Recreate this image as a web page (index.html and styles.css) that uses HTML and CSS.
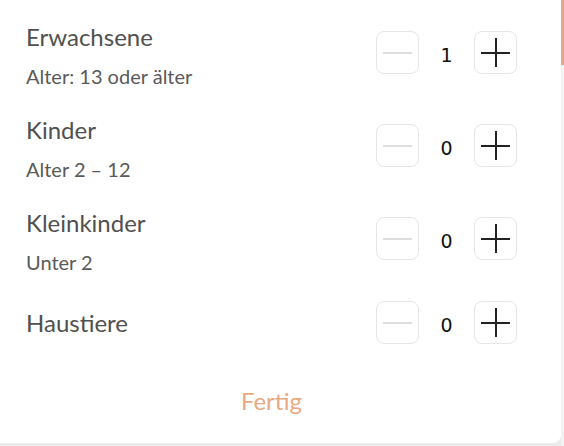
FILE: index.html
```html
<!DOCTYPE html>
<html lang="de">
<head>
    <meta charset="UTF-8">
    <meta name="viewport" content="width=device-width, initial-scale=1.0">
    <title>Gäste auswählen</title>
    <link rel="stylesheet" href="styles.css">
</head>
<body>
    <div class="sheet">
        <div class="guest-panel">
            <div class="guest-list">
                <div class="guest-row">
                    <div class="guest-info">
                        <div class="guest-title">Erwachsene</div>
                        <div class="guest-sub">Alter: 13 oder älter</div>
                    </div>
                    <div class="stepper">
                        <button class="step-btn step-minus" aria-label="weniger"><span class="bar-h"></span></button>
                        <span class="step-count">1</span>
                        <button class="step-btn step-plus" aria-label="mehr"><span class="bar-h"></span><span class="bar-v"></span></button>
                    </div>
                </div>
                <div class="guest-row">
                    <div class="guest-info">
                        <div class="guest-title">Kinder</div>
                        <div class="guest-sub">Alter 2 – 12</div>
                    </div>
                    <div class="stepper">
                        <button class="step-btn step-minus" aria-label="weniger"><span class="bar-h"></span></button>
                        <span class="step-count">0</span>
                        <button class="step-btn step-plus" aria-label="mehr"><span class="bar-h"></span><span class="bar-v"></span></button>
                    </div>
                </div>
                <div class="guest-row">
                    <div class="guest-info">
                        <div class="guest-title">Kleinkinder</div>
                        <div class="guest-sub">Unter 2</div>
                    </div>
                    <div class="stepper">
                        <button class="step-btn step-minus" aria-label="weniger"><span class="bar-h"></span></button>
                        <span class="step-count">0</span>
                        <button class="step-btn step-plus" aria-label="mehr"><span class="bar-h"></span><span class="bar-v"></span></button>
                    </div>
                </div>
                <div class="guest-row guest-row-last">
                    <div class="guest-info">
                        <div class="guest-title">Haustiere</div>
                    </div>
                    <div class="stepper">
                        <button class="step-btn step-minus" aria-label="weniger"><span class="bar-h"></span></button>
                        <span class="step-count">0</span>
                        <button class="step-btn step-plus" aria-label="mehr"><span class="bar-h"></span><span class="bar-v"></span></button>
                    </div>
                </div>
            </div>
            <div class="panel-footer">
                <button class="btn-done">Fertig</button>
            </div>
        </div>
        <div class="scroll-track"><div class="scroll-thumb"></div></div>
    </div>
</body>
</html>
```

FILE: styles.css
```css
html, body {
    margin: 0;
    padding: 0;
}
body {
    font-family: 'Lato', 'Open Sans', sans-serif;
    background-color: #ebebeb;
    color: #484848;
    height: 446px;
    overflow: hidden;
}
.sheet {
    display: flex;
    height: 443px;
}
.guest-panel {
    width: 561px;
    box-sizing: border-box;
    background-color: #fff;
    border-bottom-right-radius: 8px;
    padding: 6px 44px 0 26px;
    display: flex;
    flex-direction: column;
}
.guest-row {
    display: flex;
    align-items: center;
    justify-content: space-between;
    padding: 14px 0;
}
.guest-row-last {
    margin-top: 2px;
}
.guest-title {
    font-size: 24px;
    line-height: 34px;
    color: #505050;
}
.guest-sub {
    font-size: 20px;
    line-height: 17px;
    margin-top: 14px;
    color: #5a5a5a;
}
.stepper {
    display: flex;
    align-items: center;
}
.step-btn {
    width: 43px;
    height: 43px;
    box-sizing: border-box;
    border: 1px solid #e6e6e6;
    border-radius: 8px;
    background: #fff;
    padding: 0;
    position: relative;
    cursor: pointer;
}
.bar-h, .bar-v {
    position: absolute;
    left: 50%;
    top: 50%;
    background-color: #222;
}
.bar-h {
    width: 29px;
    height: 2px;
    margin: -1px 0 0 -14.5px;
}
.bar-v {
    width: 2px;
    height: 29px;
    margin: -14.5px 0 0 -1px;
}
.step-minus {
    cursor: default;
}
.step-minus .bar-h {
    background-color: #dedede;
}
.step-count {
    width: 55px;
    text-align: center;
    font-family: 'DejaVu Sans', sans-serif;
    font-size: 19px;
    line-height: 38px;
    padding-top: 5px;
    color: #111;
}
.panel-footer {
    display: flex;
    justify-content: center;
    padding-top: 29px;
}
.btn-done {
    background: none;
    border: none;
    padding: 0;
    font-family: 'Lato', 'Open Sans', sans-serif;
    font-size: 24px;
    line-height: 28px;
    color: #e8a982;
    cursor: pointer;
}
.scroll-track {
    width: 3px;
    height: 446px;
    background-color: #f3f3f3;
}
.scroll-thumb {
    height: 65px;
    background-color: #e1aa88;
}
```
